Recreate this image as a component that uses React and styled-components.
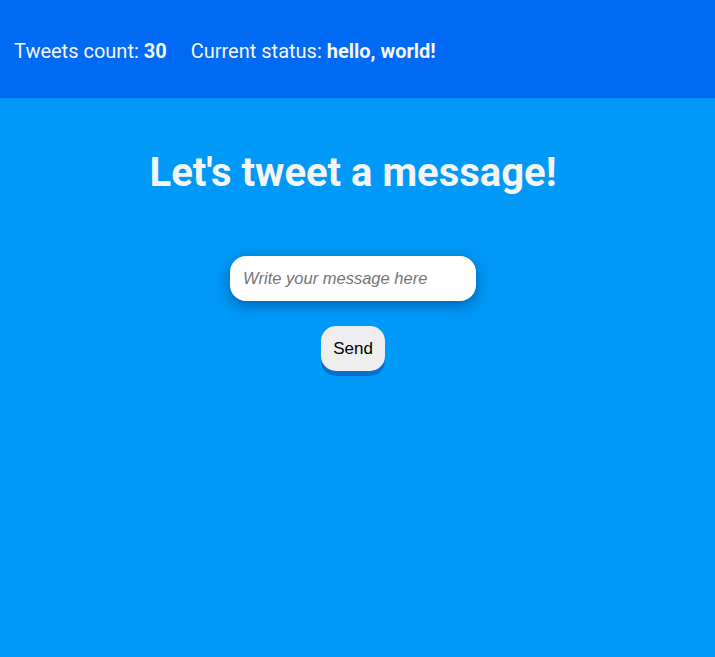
import React from 'react'
import styled, { createGlobalStyle } from 'styled-components'

const GlobalStyle = createGlobalStyle`
  html, body {
    margin: 0;
    padding: 0;
    height: 100%;
  }
  body {
    background: #0099f7;
    font-family: Roboto, "Liberation Sans", sans-serif;
  }
`

const Page = styled.div`
  min-height: 657px;
  background: #0099f7;
  color: #f5f5f5;
`

const TopBar = styled.header`
  height: 98px;
  background: #006af5;
  display: flex;
  align-items: center;
  gap: 24px;
  padding: 4px 14px 0;
  font-size: 20px;
  box-sizing: border-box;
`

const Stat = styled.span`
  b {
    font-weight: 700;
  }
`

const Main = styled.main`
  display: flex;
  flex-direction: column;
  align-items: center;
  padding-right: 9px;
`

const Title = styled.h1`
  margin: 51px 0 0;
  font-size: 40px;
  font-weight: 700;
  line-height: 48px;
`

const MessageInput = styled.input`
  margin-top: 59px;
  width: 246px;
  height: 45px;
  box-sizing: border-box;
  border: none;
  border-radius: 16px;
  padding: 0 13px;
  background: #fff;
  font-family: "Liberation Sans", Arial, sans-serif;
  font-size: 16.5px;
  outline: none;
  box-shadow: 0 4px 14px rgba(0, 40, 100, 0.5);

  &::placeholder {
    font-style: italic;
    color: #757575;
  }
`

const SendButton = styled.button`
  margin-top: 25px;
  width: 64px;
  height: 45px;
  border: none;
  border-radius: 15px;
  background: #eeeeee;
  color: #000;
  font-family: "Liberation Sans", Arial, sans-serif;
  font-size: 17px;
  cursor: pointer;
  box-shadow: 0 5px 0 #0770cc;
`

export default function App() {
  return (
    <Page>
      <GlobalStyle />
      <TopBar>
        <Stat>Tweets count: <b>30</b></Stat>
        <Stat>Current status: <b>hello, world!</b></Stat>
      </TopBar>
      <Main>
        <Title>Let's tweet a message!</Title>
        <MessageInput placeholder="Write your message here" />
        <SendButton>Send</SendButton>
      </Main>
    </Page>
  )
}
